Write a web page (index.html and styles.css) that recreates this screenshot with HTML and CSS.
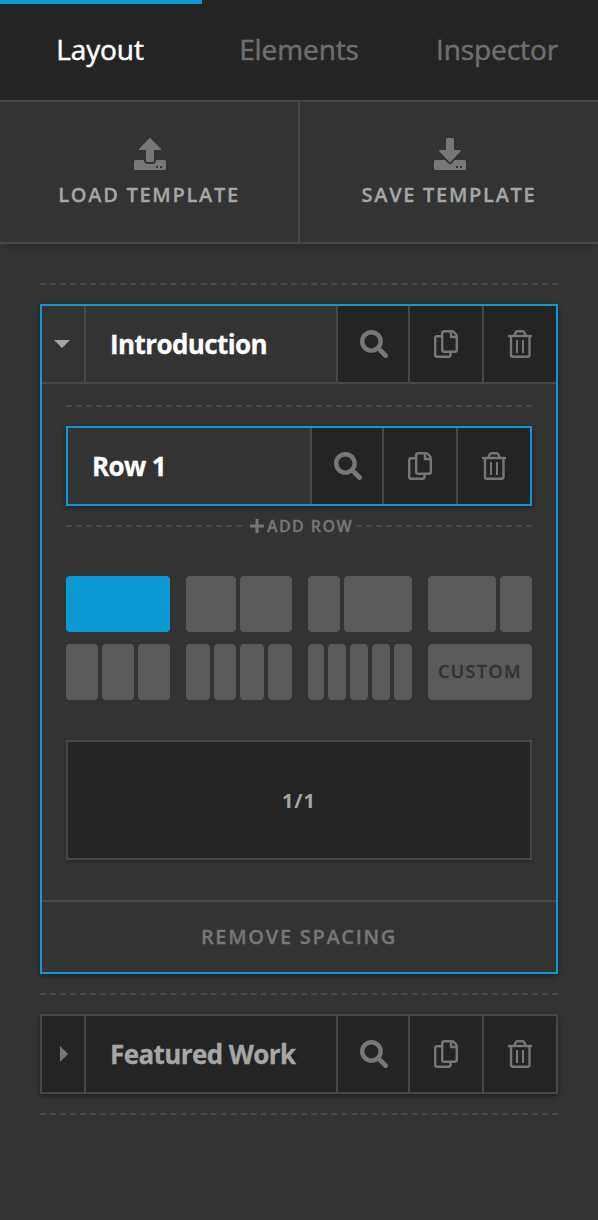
FILE: index.html
```
<!DOCTYPE html>
<html lang="en">
<head>
    <meta charset="UTF-8">
    <meta name="viewport" content="width=device-width, initial-scale=1.0">
    <title>Layout Builder</title>
    <link rel="stylesheet" href="styles.css">
</head>
<body>
    <!-- Shared icons -->
    <svg class="sprite">
        <symbol id="icon-upload" viewBox="0 0 32 32">
            <path fill="currentColor" d="M15.2 .5Q16-.3 16.8 .5L26.6 10.5Q27.6 12 26 12H20V22.5Q20 24 18.5 24H13.5Q12 24 12 22.5V12H6Q4.400 12 5.400 10.5Z"/>
            <path fill="currentColor" fill-rule="evenodd" d="M1.500 22H10Q10 26 13.500 26H18.500Q22 26 22 22H30.500Q32 22 32 23.500V30.500Q32 32 30.500 32H1.500Q0 32 0 30.500V23.500Q0 22 1.500 22ZM22 28V30H24V28ZM26 28V30H28V28Z"/>
        </symbol>
        <symbol id="icon-download" viewBox="0 0 32 32">
            <path fill="currentColor" d="M13.500 0H18.500Q20 0 20 1.500V12H26Q27.600 12 26.600 13.500L16.800 23.700Q16 24.500 15.200 23.700L5.400 13.500Q4.400 12 6 12H12V1.500Q12 0 13.500 0Z"/>
            <path fill="currentColor" fill-rule="evenodd" d="M1.500 22H11L14.200 25.300Q16 27 17.800 25.300L21 22H30.500Q32 22 32 23.500V30.500Q32 32 30.500 32H1.500Q0 32 0 30.500V23.500Q0 22 1.500 22ZM22 28V30H24V28ZM26 28V30H28V28Z"/>
        </symbol>
        <symbol id="icon-search" viewBox="0 0 28 28">
            <circle cx="11.400" cy="11.400" r="9.200" fill="none" stroke="currentColor" stroke-width="4.400"/>
            <path d="M20.500 20.500L25.500 25.500" fill="none" stroke="currentColor" stroke-width="4.800" stroke-linecap="round"/>
        </symbol>
        <symbol id="icon-copy" viewBox="0 0 24 28">
            <g fill="none" stroke="currentColor" stroke-width="2.400" stroke-linejoin="round">
                <path d="M7 6.200H3.200Q1.200 6.200 1.200 8.200V24.800Q1.200 26.800 3.200 26.800H14.500Q16.500 26.800 16.500 24.800V22.500"/>
                <path d="M10.200 1.200H17.500Q19 1.200 20 2.200L21.800 4Q22.800 5 22.800 6.500V19.800Q22.800 21.800 20.800 21.800H10.200Q8.200 21.800 8.200 19.800V3.200Q8.200 1.200 10.200 1.200Z"/>
                <path d="M17 1.500V7H22.500"/>
            </g>
        </symbol>
        <symbol id="icon-trash" viewBox="0 0 24 28">
            <g fill="none" stroke="currentColor" stroke-width="2.400">
                <path d="M0 6H24"/>
                <path d="M6.500 5.500L7.700 2.400Q8.200 1.200 9.500 1.200H14.500Q15.800 1.200 16.300 2.400L17.500 5.500"/>
                <path d="M3 6V24.800Q3 26.800 5 26.800H19.500Q21.500 26.800 21.500 24.800V6"/>
                <path stroke-width="2" d="M9 10V23M15 10V23"/>
            </g>
        </symbol>
    </svg>

    <div class="tabs">
        <div class="tab active">Layout</div>
        <div class="tab">Elements</div>
        <div class="tab">Inspector</div>
    </div>

    <div class="templates">
        <div class="template">
            <svg class="template-icon"><use href="#icon-upload"/></svg>
            <span>Load Template</span>
        </div>
        <div class="template save">
            <svg class="template-icon"><use href="#icon-download"/></svg>
            <span>Save Template</span>
        </div>
    </div>

    <div class="sections">
        <div class="divider"></div>

        <div class="section open">
            <div class="bar">
                <div class="toggle"><svg class="arrow-down" viewBox="0 0 16 8"><path d="M0 0H16L8 8Z"/></svg></div>
                <div class="name">Introduction</div>
                <div class="action search"><svg><use href="#icon-search"/></svg></div>
                <div class="action copy"><svg><use href="#icon-copy"/></svg></div>
                <div class="action trash"><svg><use href="#icon-trash"/></svg></div>
            </div>

            <div class="section-body">
                <div class="divider"></div>
                <div class="bar row-bar">
                    <div class="name">Row 1</div>
                    <div class="action search"><svg><use href="#icon-search"/></svg></div>
                    <div class="action copy"><svg><use href="#icon-copy"/></svg></div>
                    <div class="action trash"><svg><use href="#icon-trash"/></svg></div>
                </div>
                <div class="add-row">
                    <div class="divider"></div>
                    <div class="add-label">
                        <svg viewBox="0 0 14 14"><path d="M7 0V14M0 7H14"/></svg>
                        <span>Add Row</span>
                    </div>
                    <div class="divider"></div>
                </div>

                <!-- Column layouts -->
                <div class="layouts">
                    <div class="layout selected"><i></i></div>
                    <div class="layout halves"><i></i><i></i></div>
                    <div class="layout third-left"><i></i><i></i></div>
                    <div class="layout third-right"><i></i><i></i></div>
                    <div class="layout thirds"><i></i><i></i><i></i></div>
                    <div class="layout fourths"><i></i><i></i><i></i><i></i></div>
                    <div class="layout fifths"><i></i><i></i><i></i><i></i><i></i></div>
                    <div class="layout custom">Custom</div>
                </div>

                <div class="column">1/1</div>
            </div>

            <div class="section-footer">Remove Spacing</div>
        </div>

        <div class="divider"></div>

        <div class="section">
            <div class="bar">
                <div class="toggle"><svg class="arrow-right" viewBox="0 0 8 16"><path d="M0 0V16L8 8Z"/></svg></div>
                <div class="name">Featured Work</div>
                <div class="action search"><svg><use href="#icon-search"/></svg></div>
                <div class="action copy"><svg><use href="#icon-copy"/></svg></div>
                <div class="action trash"><svg><use href="#icon-trash"/></svg></div>
            </div>
        </div>

        <div class="divider"></div>
    </div>
</body>
</html>
```
FILE: styles.css
```
* {
    box-sizing: border-box;
}
body {
    margin: 0;
    min-height: 1220px;
    background-color: #333;
    color: #777;
    font-family: "Open Sans", sans-serif;
    -webkit-text-stroke: 0.3px;
}
svg {
    display: block;
}
.sprite {
    display: none;
}
.tabs {
    display: grid;
    grid-template-columns: 202px 194px 202px;
    height: 102px;
    background-color: #242424;
    border-bottom: 2px solid #474747;
}
.tab {
    padding-top: 30px;
    text-align: center;
    font-size: 28px;
    line-height: 38px;
    letter-spacing: -0.1px;
    color: #6f6f6f;
    -webkit-text-stroke: 0.5px;
}
.tab.active {
    padding-top: 26px;
    padding-right: 2px;
    border-top: 4px solid #0a99d3;
    color: #fff;
}
.templates {
    display: flex;
    height: 142px;
    border-bottom: 2px solid #474747;
    box-shadow: 0 6px 6px -4px rgba(0, 0, 0, 0.25);
}
.template {
    flex: 1;
    padding: 36px 0 0 2px;
    text-align: center;
    font-size: 20px;
    line-height: 28px;
    font-weight: 600;
    letter-spacing: 1.7px;
    text-transform: uppercase;
    color: #a6a6a6;
}
.template span {
    margin-right: 2px;
}
.template.save {
    border-left: 2px solid #474747;
}
.template-icon {
    width: 32px;
    height: 32px;
    margin: 0 auto 11px;
    color: #777;
}
.sections {
    padding: 39px 40px 0;
}
.divider {
    border-top: 2px dashed #474747;
}
.section {
    margin: 19px 0;
    border: 2px solid #474747;
    background-color: #242424;
    box-shadow: 0 2px 5px rgba(0, 0, 0, 0.4);
}
.section.open {
    border-color: #0a99d3;
    background-color: #333;
}
.bar {
    display: flex;
    height: 76px;
}
.section.open > .bar {
    height: 78px;
    border-bottom: 2px solid #474747;
}
.toggle {
    display: flex;
    align-items: center;
    width: 44px;
    border-right: 2px solid #474747;
}
.toggle svg {
    fill: #777;
}
.toggle .arrow-down {
    width: 16px;
    height: 8px;
    margin-left: 12px;
    fill: #a6a6a6;
}
.toggle .arrow-right {
    width: 8px;
    height: 16px;
    margin-left: 18px;
}
.name {
    flex: 1;
    padding-left: 24px;
    font-size: 26px;
    line-height: 76px;
    font-weight: 700;
    letter-spacing: -0.6px;
    color: #a6a6a6;
}
.open .name {
    color: #fff;
}
.action {
    display: flex;
    align-items: center;
    width: 74px;
    border-left: 2px solid #474747;
    background-color: #242424;
}
.action svg {
    width: 24px;
    height: 28px;
    margin-left: 24px;
}
.action.search {
    width: 72px;
}
.action.search svg {
    width: 28px;
    margin-left: 22px;
}
.section-body {
    height: 516px;
    padding: 21px 24px 0;
}
.bar.row-bar {
    height: 80px;
    margin: 19px 0 6px;
    border: 2px solid #0a99d3;
    box-shadow: 0 2px 5px rgba(0, 0, 0, 0.4);
}
.add-row {
    display: flex;
    align-items: center;
    height: 28px;
}
.add-row .divider {
    width: 176px;
}
.add-label {
    display: flex;
    align-items: center;
    flex: 1;
    padding-left: 8px;
    font-size: 16px;
    font-weight: 600;
    letter-spacing: 1.4px;
    white-space: nowrap;
    text-transform: uppercase;
}
.add-label svg {
    width: 14px;
    height: 14px;
    margin-right: 3px;
    stroke: #777;
    stroke-width: 3;
}
.layouts {
    display: grid;
    grid-template-columns: 104px 106px 104px 104px;
    grid-auto-rows: 56px;
    gap: 12px 16px;
    margin-top: 36px;
}
.layout {
    display: grid;
    gap: 4px;
}
.layout i {
    border-radius: 4px;
    background-color: #5a5a5a;
}
.layout.selected i {
    background-color: #0a99d3;
}
.halves {
    grid-template-columns: 50px 52px;
}
.third-left {
    grid-template-columns: 32px 68px;
}
.third-right {
    grid-template-columns: 68px 32px;
}
.thirds {
    grid-template-columns: repeat(3, 32px);
}
.fourths {
    grid-template-columns: 24px 22px 24px 24px;
}
.fifths {
    grid-template-columns: 16px repeat(4, 18px);
}
.layout.custom {
    border-radius: 4px;
    background-color: #5a5a5a;
    color: #333;
    font-size: 18px;
    line-height: 54px;
    font-weight: 600;
    letter-spacing: 1.4px;
    text-align: center;
    text-transform: uppercase;
}
.column {
    height: 120px;
    margin-top: 40px;
    border: 2px solid #474747;
    background-color: #242424;
    box-shadow: 0 2px 4px rgba(0, 0, 0, 0.25);
    color: #a6a6a6;
    font-size: 20px;
    line-height: 118px;
    font-weight: 700;
    letter-spacing: 1px;
    text-align: center;
    -webkit-text-stroke: 0;
}
.section-footer {
    height: 72px;
    border-top: 2px solid #474747;
    font-size: 20px;
    line-height: 70px;
    font-weight: 600;
    letter-spacing: 1.7px;
    text-align: center;
    text-transform: uppercase;
}
```
